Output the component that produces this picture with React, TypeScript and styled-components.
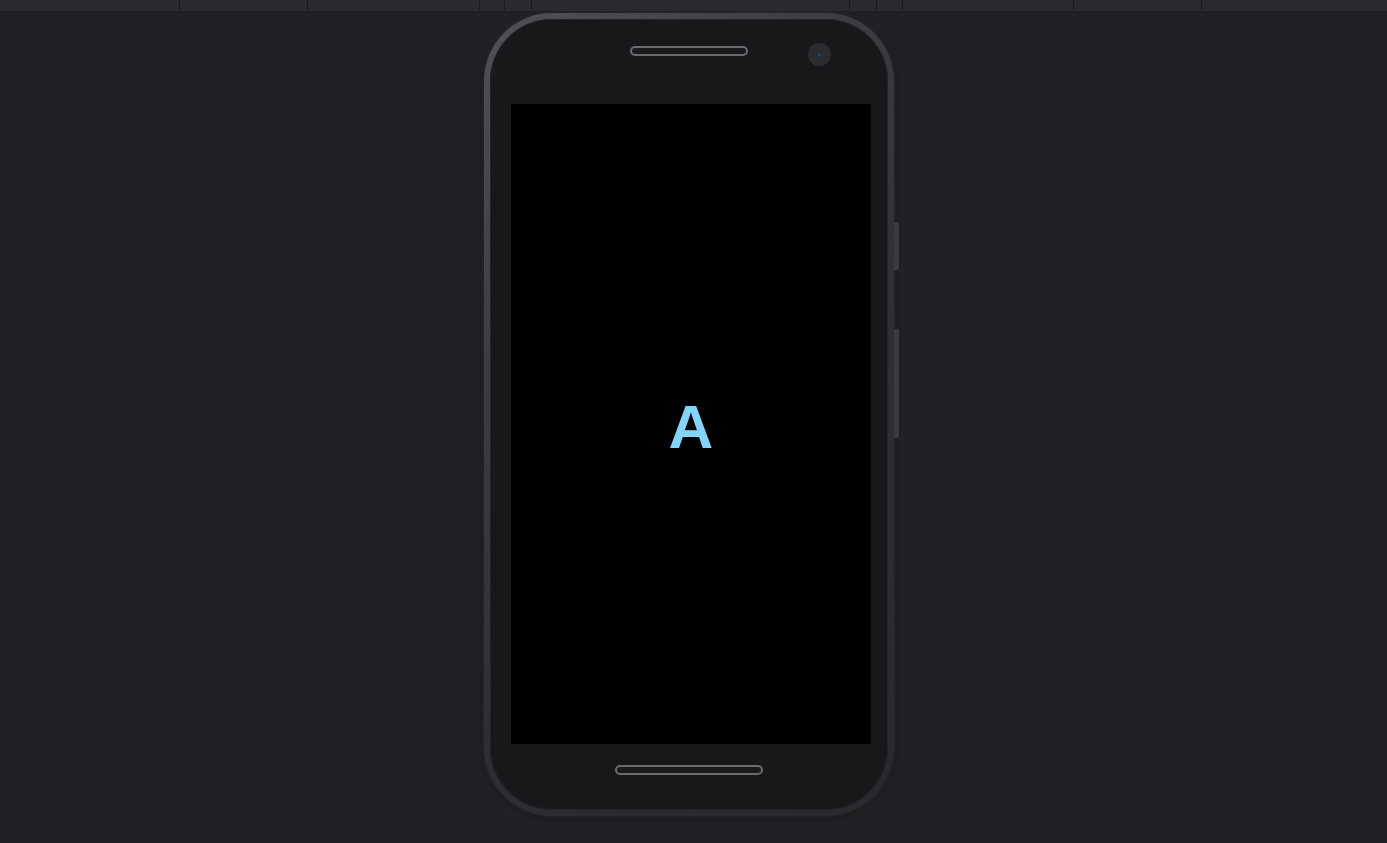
import React from "react";
import styled, { createGlobalStyle } from "styled-components";

const Global = createGlobalStyle`
  html, body { margin: 0; padding: 0; background: #202124; }
  body { font-family: "Liberation Sans", Arial, sans-serif; overflow: hidden; }
`;

const Page = styled.div`
  width: 1387px;
  height: 843px;
  background: #202124;
  display: flex;
  flex-direction: column;
`;

const TopBar = styled.div`
  height: 11px;
  background: #2a2b30;
  display: flex;
  flex-shrink: 0;
`;

const Segment = styled.div<{ $w?: number }>`
  width: ${(p) => (p.$w ? `${p.$w}px` : "auto")};
  flex: ${(p) => (p.$w ? "0 0 auto" : "1")};
  height: 10px;
  box-sizing: border-box;
  border-right: ${(p) => (p.$w ? "1px solid #1a1b1e" : "none")};
`;

const Stage = styled.div`
  flex: 1;
  display: flex;
  justify-content: flex-start;
  padding: 2px 0 0 484px;
`;

const PhoneFrame = styled.div`
  position: relative;
  width: 410px;
  height: 803px;
  box-sizing: border-box;
  border-radius: 68px;
  padding: 6px;
  background: linear-gradient(135deg, #505154 0%, #3c3d40 30%, #2e2f32 60%, #28292c 100%);
  box-shadow: 0 0 0 2px rgba(255, 255, 255, 0.025), 0 2px 6px rgba(0, 0, 0, 0.3);
`;

const Body = styled.div`
  position: relative;
  width: 100%;
  height: 100%;
  box-sizing: border-box;
  border-radius: 62px;
  background: #17181a;
  box-shadow: inset 0 0 0 1px #222326;
  display: flex;
  flex-direction: column;
  align-items: flex-start;
`;

const Header = styled.div`
  position: relative;
  width: 100%;
  height: 85px;
  box-sizing: border-box;
  padding-top: 27px;
  flex-shrink: 0;
`;

const Speaker = styled.div<{ $w: number; $left: number; $h: number }>`
  width: ${(p) => p.$w}px;
  height: ${(p) => p.$h}px;
  margin-left: ${(p) => p.$left}px;
  box-sizing: border-box;
  border: 2px solid #6a6b6e;
  border-radius: 6px;
  background: #1a1b1d;
`;

const Camera = styled.div`
  position: absolute;
  left: 318px;
  top: 24px;
  width: 23px;
  height: 23px;
  border-radius: 50%;
  background: #2b2c2f;
  display: flex;
  align-items: center;
  justify-content: center;
  &::after {
    content: "";
    width: 3px;
    height: 3px;
    border-radius: 50%;
    background: #1d4a6e;
  }
`;

const Screen = styled.div`
  width: 360px;
  height: 640px;
  margin-left: 21px;
  background: #000;
  display: flex;
  align-items: center;
  justify-content: center;
  flex-shrink: 0;
`;

const Letter = styled.span`
  font-family: "Liberation Sans", Arial, sans-serif;
  font-weight: 700;
  font-size: 62px;
  line-height: 1;
  color: #81d4fa;
  transform: translate(0px, 3px);
`;

const Footer = styled.div`
  width: 100%;
  padding-top: 21px;
`;

const SideButton = styled.div<{ $top: number; $h: number }>`
  position: absolute;
  right: -5px;
  top: ${(p) => p.$top}px;
  width: 5px;
  height: ${(p) => p.$h}px;
  background: #3a3b3e;
  border-radius: 0 2px 2px 0;
`;

const segments = [180, 128, 172, 25, 27, 318, 27, 26, 171, 128];

export default function App() {
  return (
    <Page>
      <Global />
      <TopBar>
        {segments.map((w, i) => (
          <Segment key={i} $w={w} />
        ))}
        <Segment />
      </TopBar>
      <Stage>
        <PhoneFrame>
          <SideButton $top={209} $h={48} />
          <SideButton $top={316} $h={109} />
          <Body>
            <Header>
              <Speaker $w={118} $h={10} $left={140} />
              <Camera />
            </Header>
            <Screen>
              <Letter>A</Letter>
            </Screen>
            <Footer>
              <Speaker $w={148} $h={10} $left={125} />
            </Footer>
          </Body>
        </PhoneFrame>
      </Stage>
    </Page>
  );
}
